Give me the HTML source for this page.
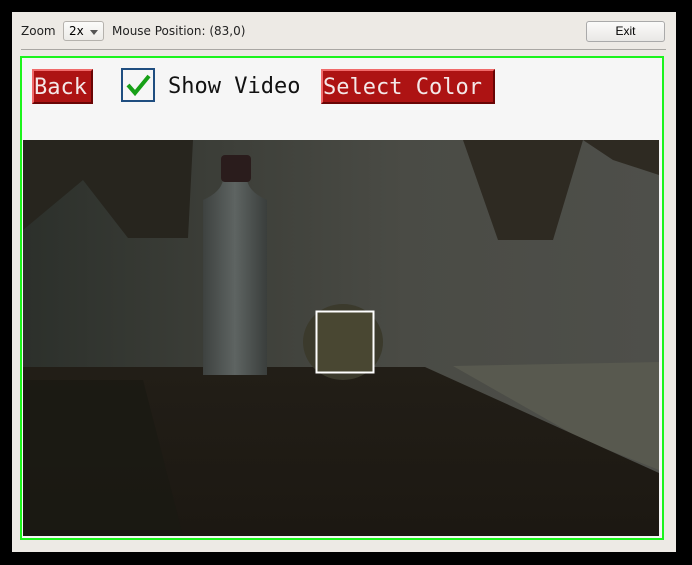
<!DOCTYPE html>
<html><head><style>
body{margin:0;width:692px;height:565px;background:#000;position:relative;overflow:hidden;font-family:"DejaVu Sans","Liberation Sans",sans-serif}
.panel{position:absolute;left:12px;top:12px;width:664px;height:540px;background:#edeae5}
.t{position:absolute;font-size:12px;color:#222;top:24px}
.combo{position:absolute;left:63px;top:21px;width:41px;height:20px;border:1px solid #b5b2ad;border-radius:3px;background:linear-gradient(#fbfbfa,#ecebe8);box-sizing:border-box}
.exit{position:absolute;left:586px;top:21px;width:79px;height:21px;border:1px solid #aaa;border-radius:3px;background:linear-gradient(#fbfbfa,#e9e8e5);box-sizing:border-box;font-size:12px;text-align:center;line-height:19px;font-family:"Liberation Sans",sans-serif}
.sep{position:absolute;left:21px;top:49px;width:645px;height:1px;background:#a9a7a3}
.green{position:absolute;left:20px;top:56px;width:644px;height:484px;border:2px solid #1cf41c;box-sizing:border-box;background:#f6f6f6}
.btn{position:absolute;top:69px;height:35px;background:#ad1313;border-top:2px solid #f06a6a;border-left:2px solid #f06a6a;border-right:2px solid #6a0505;border-bottom:2px solid #6a0505;box-sizing:border-box;color:#f4e8e8;font-family:"DejaVu Sans Mono","Liberation Mono",monospace;font-size:22px;line-height:33px}
.mono{position:absolute;top:74px;font-family:"DejaVu Sans Mono","Liberation Mono",monospace;font-size:22px;color:#111}
</style></head><body>
<div class="panel"></div>
<div class="t" style="left:21px">Zoom</div>
<div class="combo"><span style="position:absolute;left:5px;top:2px;font-size:12px">2x</span><span style="position:absolute;left:26px;top:8px;border-left:4px solid transparent;border-right:4px solid transparent;border-top:5px solid #555"></span></div>
<div class="t" style="left:112px">Mouse Position: (83,0)</div>
<div class="exit">Exit</div>
<div class="sep"></div>
<div class="green"></div>
<div class="btn" style="left:32px;width:61px">Back</div>
<div style="position:absolute;left:121px;top:68px;width:34px;height:34px;border:2px solid #1f4e80;box-sizing:border-box;background:#f6f6f6">
<svg width="30" height="30" viewBox="0 0 30 30" style="position:absolute;left:0;top:0"><path d="M5 15 L12 23 L26 6" stroke="#17a017" stroke-width="4" fill="none"/></svg></div>
<div class="mono" style="left:168px">Show Video</div>
<div class="btn" style="left:321px;width:174px">Select Color</div>
<svg style="position:absolute;left:23px;top:140px" width="636" height="396" viewBox="0 0 636 396">
<defs>
<linearGradient id="wall" x1="0" y1="0" x2="1" y2="0"><stop offset="0" stop-color="#2c302b"/><stop offset="0.3" stop-color="#3c3e38"/><stop offset="0.6" stop-color="#4a4b45"/><stop offset="1" stop-color="#4e4f4a"/></linearGradient>
<linearGradient id="floor" x1="0" y1="0" x2="0" y2="1"><stop offset="0" stop-color="#221e17"/><stop offset="1" stop-color="#1c1812"/></linearGradient>
<linearGradient id="bottle" x1="0" y1="0" x2="1" y2="0"><stop offset="0" stop-color="#3e4240"/><stop offset="0.5" stop-color="#5e6462"/><stop offset="1" stop-color="#3a3e3c"/></linearGradient>
</defs>
<rect width="636" height="396" fill="url(#wall)"/>
<path d="M0 0 H170 L165 98 L105 98 L60 40 L0 90Z" fill="#27251e"/>
<path d="M440 0 H560 L530 100 L475 100Z" fill="#2e2a22"/>
<path d="M560 0 H636 V35 L590 20Z" fill="#2e2a22"/>
<path d="M430 226 L636 222 L636 330 L560 300Z" fill="#58594f"/>
<path d="M0 227 L402 227 L636 333 L636 396 L0 396Z" fill="url(#floor)"/>
<path d="M0 240 L120 240 L160 396 L0 396Z" fill="#1a1913" opacity="0.7"/>
<path d="M180 60 q18 -8 20 -20 h24 q2 12 20 20 v175 h-64z" fill="url(#bottle)"/>
<rect x="198" y="15" width="30" height="27" rx="4" fill="#2a1c1c"/>
<ellipse cx="320" cy="202" rx="40" ry="38" fill="#3b3a2c"/>
<rect x="293.5" y="171.5" width="57" height="61" fill="#494732" />
<rect x="293.5" y="171.5" width="57" height="61" fill="none" stroke="#fff" stroke-width="2"/>
</svg>
</body></html>
